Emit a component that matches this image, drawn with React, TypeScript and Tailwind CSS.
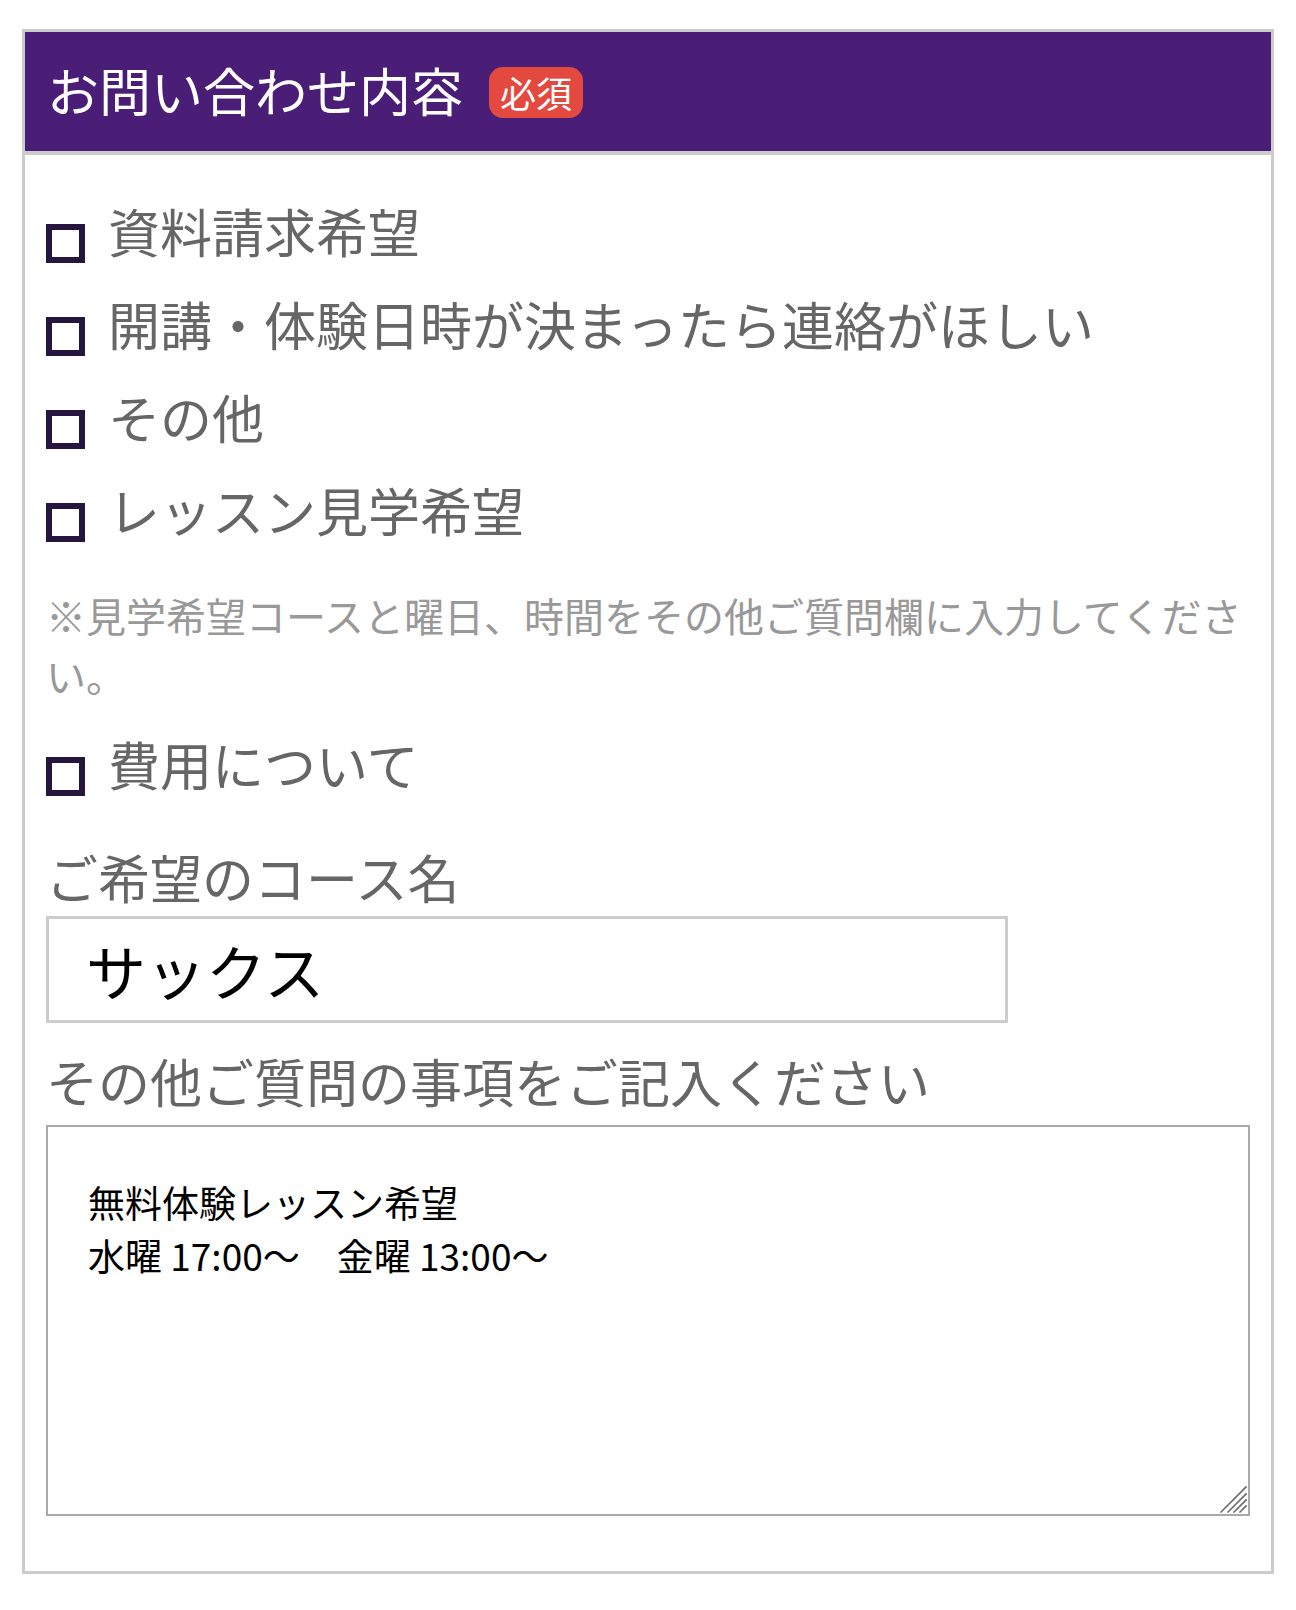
import React from "react";

const font = { fontFamily: '"Noto Sans CJK JP", "Noto Sans", sans-serif' };

function CheckRow({ label }: { label: string }) {
  return (
    <label className="flex h-[93px] items-center">
      <span className="mt-[19px] block h-[39px] w-[39px] shrink-0 border-[6px] border-[#26163f] bg-white" />
      <span className="ml-[23px] pb-[5px] text-[52px] leading-[88px] text-[#666666] whitespace-nowrap">{label}</span>
    </label>
  );
}

export default function App() {
  return (
    <div className="h-[1610px] bg-white px-[22px] pt-[29px]" style={font}>
      <div className="border-[3px] border-[#cccccc] bg-white">
        <div className="flex h-[123px] items-center border-b-[4px] border-[#cccccc] bg-[#4a1e77] pl-[22px]">
          <span className="pb-[3px] text-[52px] leading-none text-white whitespace-nowrap">お問い合わせ内容</span>
          <span className="ml-[26px] mt-[2px] flex h-[51px] w-[94px] items-center justify-center rounded-[14px] bg-[#e4493f] pb-[2px] text-[36px] leading-none text-white">
            必須
          </span>
        </div>
        <div className="px-[21px] pt-[32px] pb-[55px]">
          <CheckRow label="資料請求希望" />
          <CheckRow label="開講・体験日時が決まったら連絡がほしい" />
          <CheckRow label="その他" />
          <CheckRow label="レッスン見学希望" />
          <p className="mt-[26px] text-[40px] leading-[60px] text-[#999999]">
            ※見学希望コースと曜日、時間をその他ご質問欄に入力してください。
          </p>
          <div className="mt-[15px]">
            <CheckRow label="費用について" />
          </div>
          <div className="mt-[34px] text-[52px] leading-[60px] text-[#666666] whitespace-nowrap">ご希望のコース名</div>
          <input
            className="mt-[9px] block h-[107px] w-[962px] border-[3px] border-[#cccccc] bg-white pl-[37px] text-[60px] text-black outline-none"
            style={font}
            defaultValue="サックス"
          />
          <div className="mt-[28px] text-[52px] leading-[60px] text-[#666666] whitespace-nowrap">
            その他ご質問の事項をご記入ください
          </div>
          <div className="relative mt-[14px]">
            <textarea
              className="block h-[391px] w-full resize-none border-[2px] border-[#a9a9a9] bg-white pl-[40px] pt-[49px] text-[37px] leading-[53px] text-black outline-none"
              style={font}
              defaultValue={"無料体験レッスン希望\n水曜 17:00〜　金曜 13:00〜"}
            />
            <svg
              className="pointer-events-none absolute bottom-[3px] right-[3px]"
              width="28"
              height="28"
              viewBox="0 0 28 28"
            >
              <g stroke="#6e6e6e" strokeWidth="1.6" strokeLinecap="square">
                <line x1="2" y1="27" x2="27" y2="2" />
                <line x1="9" y1="27" x2="27" y2="9" />
                <line x1="15" y1="27" x2="27" y2="15" />
                <line x1="21" y1="27" x2="27" y2="21" />
              </g>
            </svg>
          </div>
        </div>
      </div>
    </div>
  );
}
